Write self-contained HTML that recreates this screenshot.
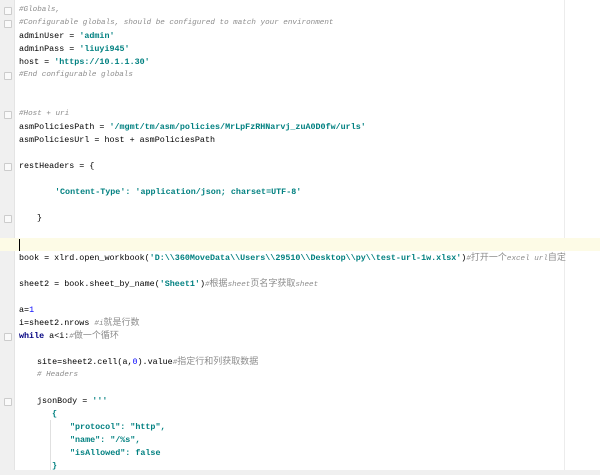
<!DOCTYPE html>
<html><head><meta charset="utf-8"><style>
html,body{margin:0;padding:0}
body{width:600px;height:475px;overflow:hidden;background:#fff;position:relative;font-family:"Liberation Mono","Noto Sans CJK SC",monospace;font-size:8.4px;color:#000}
.g{position:absolute;left:0;top:0;width:14px;height:475px;background:#f0f0f0;border-right:1px solid #e4e4e4}
.m{position:absolute;left:564px;top:0;width:1px;height:475px;background:#ececec}
.hl{position:absolute;left:0;top:238px;width:600px;height:13px;background:#fdfbe6}
.bot{position:absolute;left:0;top:470px;width:600px;height:5px;background:#f0f0f0}
.l{position:absolute;white-space:pre;line-height:13px;height:13px}
.c{color:#8c8c8c;font-style:italic;font-size:7.6px}
.s{color:#008080;font-weight:bold}
.k{color:#000080;font-weight:bold}
.n{color:#0000ff}
.z{font-size:9px;font-style:normal}
.cur{position:absolute;left:19px;top:239px;width:1px;height:12px;background:#000}
.f{position:absolute;left:4px;width:6px;height:6px;border:1px solid #ccc;border-radius:1px;background:#fafafa}
.ig{position:absolute;left:50px;top:420px;width:1px;height:50px;background:#e0e0e0}
</style></head><body>
<div class="g"></div><div class="m"></div><div class="hl"></div><div class="bot"></div>
<div class="f" style="top:7px"></div><div class="f" style="top:20px"></div><div class="f" style="top:72px"></div><div class="f" style="top:111px"></div><div class="f" style="top:163px"></div><div class="f" style="top:215px"></div><div class="f" style="top:333px"></div><div class="f" style="top:398px"></div>
<div class="ig"></div>
<div class="l c" style="left:19px;top:4px">#Globals,</div>
<div class="l c" style="left:19px;top:17px">#Configurable globals, should be configured to match your environment</div>
<div class="l" style="left:19px;top:30px">adminUser = <span class="s">'admin'</span></div>
<div class="l" style="left:19px;top:43px">adminPass = <span class="s">'liuyi945'</span></div>
<div class="l" style="left:19px;top:56px">host = <span class="s">'https://10.1.1.30'</span></div>
<div class="l c" style="left:19px;top:69px">#End configurable globals</div>
<div class="l c" style="left:19px;top:108px">#Host + uri</div>
<div class="l" style="left:19px;top:121px">asmPoliciesPath = <span class="s">'/mgmt/tm/asm/policies/MrLpFzRHNarvj_zuA0D0fw/urls'</span></div>
<div class="l" style="left:19px;top:134px">asmPoliciesUrl = host + asmPoliciesPath</div>
<div class="l" style="left:19px;top:160px">restHeaders = {</div>
<div class="l s" style="left:55px;top:186px">'Content-Type': 'application/json; charset=UTF-8'</div>
<div class="l" style="left:37px;top:212px">}</div>
<div class="cur"></div>
<div class="l" style="left:19px;top:252px">book = xlrd.open_workbook(<span class="s">'D:\\360MoveData\\Users\\29510\\Desktop\\py\\test-url-1w.xlsx'</span>)<span class="c">#<span class="z">打开一个</span>excel url<span class="z">自定</span></span></div>
<div class="l" style="left:19px;top:278px">sheet2 = book.sheet_by_name(<span class="s">'Sheet1'</span>)<span class="c">#<span class="z">根据</span>sheet<span class="z">页名字获取</span>sheet</span></div>
<div class="l" style="left:19px;top:304px">a=<span class="n">1</span></div>
<div class="l" style="left:19px;top:317px">i=sheet2.nrows <span class="c">#i<span class="z">就是行数</span></span></div>
<div class="l" style="left:19px;top:330px"><span class="k">while</span> a&lt;i:<span class="c">#<span class="z">做一个循环</span></span></div>
<div class="l" style="left:37px;top:356px">site=sheet2.cell(a,<span class="n">0</span>).value<span class="c">#<span class="z">指定行和列获取数据</span></span></div>
<div class="l c" style="left:37px;top:369px"># Headers</div>
<div class="l" style="left:37px;top:395px">jsonBody = <span class="s">'''</span></div>
<div class="l s" style="left:52px;top:408px">{</div>
<div class="l s" style="left:70px;top:421px">"protocol": "http",</div>
<div class="l s" style="left:70px;top:434px">"name": "/%s",</div>
<div class="l s" style="left:70px;top:447px">"isAllowed": false</div>
<div class="l s" style="left:52px;top:460px">}</div>
</body></html>
